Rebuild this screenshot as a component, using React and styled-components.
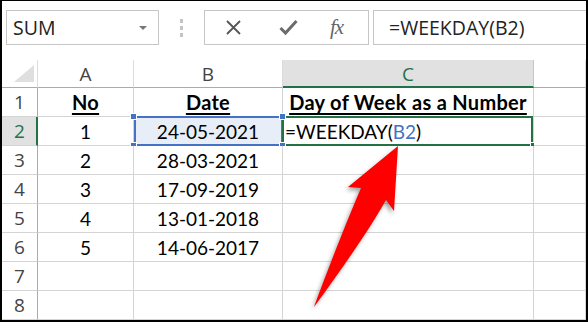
import React from "react";
import styled, { createGlobalStyle } from "styled-components";

const GlobalStyle = createGlobalStyle`
  body {
    margin: 0;
    background: #fff;
  }
`;

const Frame = styled.div`
  position: relative;
  width: 588px;
  height: 322px;
  box-sizing: border-box;
  border: 2px solid #000;
  border-top-width: 1px;
  background: #fff;
  overflow: hidden;
`;

const Toolbar = styled.div`
  display: flex;
  align-items: flex-start;
  height: 59px;
  padding: 9px 0 0 4px;
  box-sizing: border-box;
`;

const NameBox = styled.div`
  width: 153px;
  height: 35px;
  box-sizing: border-box;
  border: 1px solid #c6c6c6;
  display: flex;
  align-items: center;
  justify-content: space-between;
  padding: 0 11px 0 6px;
  font-family: "Open Sans", sans-serif;
  font-size: 19.5px;
  color: #222;
`;

const DropArrow = styled.span`
  width: 0;
  height: 0;
  border-left: 4px solid transparent;
  border-right: 4px solid transparent;
  border-top: 4px solid #777;
`;

const Grip = styled.div`
  width: 45px;
  height: 35px;
  display: flex;
  flex-direction: column;
  align-items: center;
  justify-content: center;
  gap: 3px;
`;

const GripDot = styled.span`
  width: 3px;
  height: 4px;
  background: #c4c4c4;
`;

const ButtonBox = styled.div`
  width: 165px;
  height: 35px;
  box-sizing: border-box;
  border: 1px solid #c6c6c6;
  display: grid;
  grid-template-columns: 56px 54px 1fr;
  align-items: center;
  justify-items: center;
`;

const Fx = styled.span`
  font-family: "Liberation Serif", serif;
  font-style: italic;
  font-size: 21px;
  color: #666;
  letter-spacing: -1px;
  margin-right: 10px;
`;

const FormulaBox = styled.div`
  flex: 1;
  margin-left: 4px;
  height: 35px;
  box-sizing: border-box;
  border: 1px solid #c6c6c6;
  border-right: none;
  display: flex;
  align-items: center;
  padding-left: 15px;
  font-family: "Open Sans", sans-serif;
  font-size: 19.5px;
  color: #222;
`;

const Sheet = styled.div`
  display: grid;
  grid-template-columns: 36px 96px 149px 251px 1fr;
  grid-template-rows: 28px repeat(8, 29px);
`;

const Corner = styled.div`
  display: flex;
  align-items: flex-end;
  justify-content: flex-end;
  padding: 0 3px 5px 0;
  border-right: 1px solid #dcdcdc;
  border-bottom: 1px solid #ababab;
`;

const CornerTriangle = styled.span`
  width: 0;
  height: 0;
  border-left: 20px solid transparent;
  border-bottom: 17px solid #dfdfdf;
`;

const ColHead = styled.div`
  display: flex;
  align-items: center;
  justify-content: center;
  font-family: "Open Sans", sans-serif;
  font-size: 19px;
  color: ${(p) => (p.$active ? "#217346" : "#444")};
  background: ${(p) => (p.$active ? "#e1e1e1" : "#fff")};
  border-right: 1px solid ${(p) => (p.$active ? "#c6c6c6" : "#dcdcdc")};
  border-bottom: ${(p) => (p.$active ? "2px solid #217346" : "1px solid #ababab")};
  padding-top: ${(p) => (p.$active ? "1px" : "0")};
`;

const RowHead = styled.div`
  display: flex;
  align-items: center;
  justify-content: center;
  font-family: "Open Sans", sans-serif;
  font-size: 19px;
  color: ${(p) => (p.$active ? "#217346" : "#444")};
  background: ${(p) => (p.$active ? "#e1e1e1" : "#fff")};
  border-right: ${(p) => (p.$active ? "2px solid #217346" : "1px solid #ababab")};
  border-bottom: 1px solid #d4d4d4;
  padding-left: ${(p) => (p.$active ? "1px" : "0")};
`;

const Cell = styled.div`
  position: relative;
  display: flex;
  align-items: center;
  justify-content: ${(p) => (p.$left ? "flex-start" : "center")};
  padding-left: ${(p) => (p.$left ? "2px" : "0")};
  font-family: "Lato", sans-serif;
  font-size: ${(p) => (p.$head ? "20px" : "19px")};
  font-weight: ${(p) => (p.$head ? 700 : 400)};
  letter-spacing: ${(p) => (p.$head ? "0.3px" : "0")};
  text-decoration: ${(p) => (p.$head ? "underline" : "none")};
  text-decoration-thickness: 2px;
  text-underline-offset: 3px;
  color: #000;
  background: ${(p) => (p.$ref ? "#e8eef8" : "#fff")};
  border-right: 1px solid #d4d4d4;
  border-bottom: 1px solid #d4d4d4;
`;

const RefBox = styled.span`
  position: absolute;
  left: 0;
  top: -1px;
  right: -1px;
  bottom: -1px;
  border: 2px solid #4472c4;
  pointer-events: none;
`;

const ActiveBox = styled.span`
  position: absolute;
  left: -1px;
  top: -1px;
  right: 0;
  bottom: -1px;
  border: 2px solid #217346;
  pointer-events: none;
`;

const Handle = styled.span`
  position: absolute;
  width: 5px;
  height: 5px;
  background: ${(p) => p.$color};
  border: 1px solid #fff;
  ${(p) => (p.$top ? "top: -4px;" : "bottom: -4px;")}
  ${(p) => (p.$leftSide ? "left: -4px;" : "right: -4px;")}
`;

const RefText = styled.span`
  color: #4472c4;
`;

const ArrowLayer = styled.svg`
  position: absolute;
  left: 0;
  top: 0;
  filter: drop-shadow(-2px 3px 2px rgba(0, 0, 0, 0.35));
  pointer-events: none;
`;

const rows = [
  ["1", "24-05-2021"],
  ["2", "28-03-2021"],
  ["3", "17-09-2019"],
  ["4", "13-01-2018"],
  ["5", "14-06-2017"],
];

function CrossIcon() {
  return (
    <svg width="17" height="17" viewBox="0 0 17 17">
      <path d="M2 2 L15 15 M15 2 L2 15" stroke="#555" strokeWidth="1.8" fill="none" />
    </svg>
  );
}

function CheckIcon() {
  return (
    <svg width="19" height="17" viewBox="0 0 19 17">
      <path d="M1.5 9 L6.5 14 L17.5 2" stroke="#6b6b6b" strokeWidth="3" fill="none" />
    </svg>
  );
}

export default function App() {
  return (
    <>
      <GlobalStyle />
      <Frame>
        <Toolbar>
          <NameBox>
            SUM
            <DropArrow />
          </NameBox>
          <Grip>
            <GripDot />
            <GripDot />
            <GripDot />
          </Grip>
          <ButtonBox>
            <CrossIcon />
            <CheckIcon />
            <Fx>fx</Fx>
          </ButtonBox>
          <FormulaBox>=WEEKDAY(B2)</FormulaBox>
        </Toolbar>

        <Sheet>
          <Corner>
            <CornerTriangle />
          </Corner>
          <ColHead>A</ColHead>
          <ColHead>B</ColHead>
          <ColHead $active>C</ColHead>
          <ColHead />

          <RowHead>1</RowHead>
          <Cell $head>No</Cell>
          <Cell $head>Date</Cell>
          <Cell $head>Day of Week as a Number</Cell>
          <Cell />

          {rows.map(([no, date], i) => {
            const first = i === 0;
            return (
              <React.Fragment key={no}>
                <RowHead $active={first}>{i + 2}</RowHead>
                <Cell>{no}</Cell>
                <Cell $ref={first}>
                  {date}
                  {first && (
                    <>
                      <RefBox />
                      <Handle $color="#4472c4" $top $leftSide />
                      <Handle $color="#4472c4" $top />
                      <Handle $color="#4472c4" $leftSide />
                      <Handle $color="#4472c4" />
                    </>
                  )}
                </Cell>
                <Cell $left={first}>
                  {first && (
                    <>
                      =WEEKDAY(<RefText>B2</RefText>)
                      <ActiveBox />
                      <Handle $color="#4472c4" $top $leftSide />
                      <Handle $color="#4472c4" $leftSide />
                      <Handle $color="#217346" />
                    </>
                  )}
                </Cell>
                <Cell />
              </React.Fragment>
            );
          })}

          {[7, 8].map((n) => (
            <React.Fragment key={n}>
              <RowHead>{n}</RowHead>
              <Cell />
              <Cell />
              <Cell />
              <Cell />
            </React.Fragment>
          ))}
        </Sheet>

        <ArrowLayer width="584" height="319" viewBox="2 1 584 319">
          <path
            d="M398 146 L394 211 L386 200 C372 225 345 265 314 307 C322 285 345 225 361 188 L348 187 Z"
            fill="#ff0000"
          />
        </ArrowLayer>
      </Frame>
    </>
  );
}
